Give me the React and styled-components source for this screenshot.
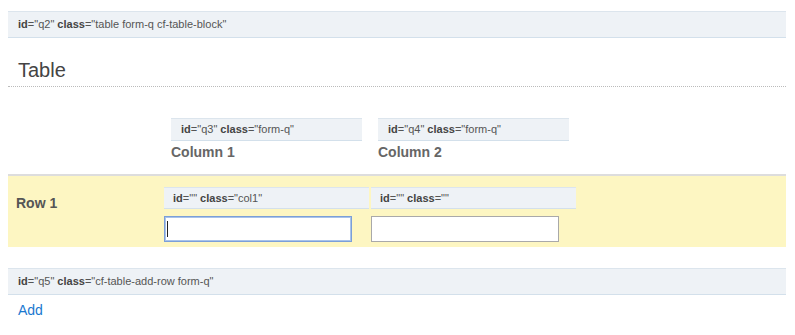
import styled, { createGlobalStyle } from 'styled-components';

const GlobalStyle = createGlobalStyle`
    body {
        margin: 8px;
        font-family: "Liberation Sans", Arial, sans-serif;
        background: #fff;
        color: #444;
    }
`

const Page = styled.div`
    width: 778px;
    padding-top: 3px;
`

const QBar = styled.div`
    box-sizing: border-box;
    height: ${p => p.$h || 27}px;
    line-height: ${p => (p.$h || 27) - 2}px;
    padding-left: ${p => p.$pad || 10}px;
    background: #eef2f6;
    border-top: 1px solid #dce5ed;
    border-bottom: 1px solid #d3e0eb;
    font-size: 11px;
    color: #555;
    white-space: nowrap;
    overflow: hidden;
    b {
        color: #444;
    }
`

const Legend = styled.div`
    margin-top: 18px;
    padding-left: 10px;
    line-height: 28px;
    padding-bottom: 2px;
    font-size: 20px;
    color: #444;
    border-bottom: 1px dotted #bbb;
`

const Grid = styled.div`
    display: grid;
    grid-template-columns: 154px 205px 205px 1fr;
    column-gap: 2px;
`

const HeadRow = styled(Grid)`
    padding-top: 31px;
    padding-bottom: 14px;
`

const HeadCell = styled.div`
    padding: 0 7px;
`

const ColLabel = styled.div`
    margin-top: 3px;
    line-height: 16px;
    font-size: 14px;
    font-weight: bold;
    color: #666;
`

const DataRow = styled(Grid)`
    border-top: 2px solid #ddd;
    background: #fdf6c2;
    padding: 11px 0 5px;
`

const RowLabel = styled.div`
    padding-left: 8px;
    padding-top: 8px;
    font-size: 14px;
    font-weight: bold;
    color: #555;
`

const Field = styled.div`
    position: relative;
    width: 188px;
    margin-top: 7px;
`

const Input = styled.input`
    display: block;
    box-sizing: border-box;
    width: 188px;
    height: 26px;
    margin: 0;
    padding: 0 3px;
    background: #fff;
    outline: none;
    font-family: inherit;
    font-size: 13px;
    border: 1px solid ${p => p.$focused ? '#7b9fd8' : '#a9a9a9'};
    box-shadow: ${p => p.$focused ? 'inset 0 0 0 1px #a9c3ea' : 'none'};
    caret-color: transparent;
`

const Caret = styled.span`
    position: absolute;
    left: 3px;
    top: 5px;
    width: 1px;
    height: 16px;
    background: #222;
`

const Footer = styled.div`
    margin-top: 21px;
`

const AddLink = styled.a`
    display: block;
    padding-left: 10px;
    margin-top: 7px;
    font-size: 14px;
    line-height: 17px;
    color: #1a78cf;
    text-decoration: none;
    cursor: pointer;
`

const Attr = ({id, cls}) => (
    <>
        <b>id</b>="{id}" <b>class</b>="{cls}"
    </>
)

function App() {
    return (
        <Page>
            <GlobalStyle />
            <QBar>
                <Attr id="q2" cls="table form-q cf-table-block" />
            </QBar>
            <Legend>Table</Legend>

            <HeadRow>
                <div />
                <HeadCell>
                    <QBar $h={23}>
                        <Attr id="q3" cls="form-q" />
                    </QBar>
                    <ColLabel>Column 1</ColLabel>
                </HeadCell>
                <HeadCell>
                    <QBar $h={23}>
                        <Attr id="q4" cls="form-q" />
                    </QBar>
                    <ColLabel>Column 2</ColLabel>
                </HeadCell>
            </HeadRow>

            <DataRow>
                <RowLabel>Row 1</RowLabel>
                <div>
                    <QBar $h={22} $pad={9}>
                        <Attr id="" cls="col1" />
                    </QBar>
                    <Field>
                        <Input $focused />
                        <Caret />
                    </Field>
                </div>
                <div>
                    <QBar $h={22} $pad={9}>
                        <Attr id="" cls="" />
                    </QBar>
                    <Field>
                        <Input />
                    </Field>
                </div>
            </DataRow>

            <Footer>
                <QBar>
                    <Attr id="q5" cls="cf-table-add-row form-q" />
                </QBar>
                <AddLink>Add</AddLink>
            </Footer>
        </Page>
    )
}

export default App;
